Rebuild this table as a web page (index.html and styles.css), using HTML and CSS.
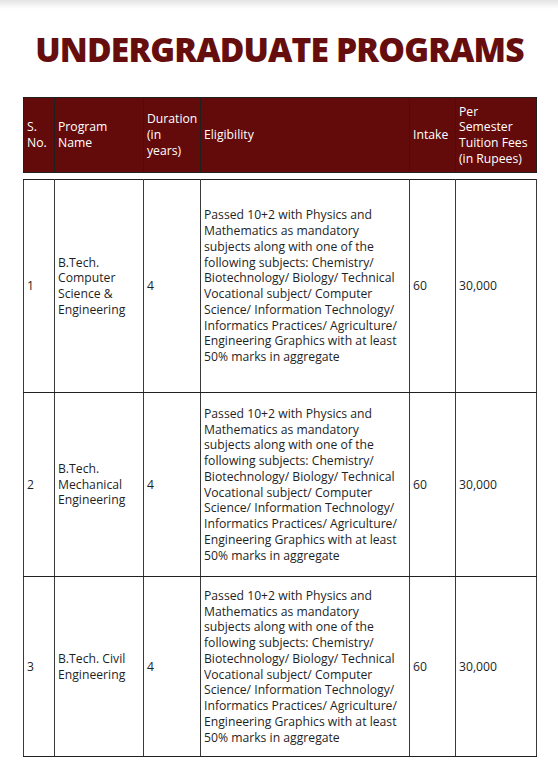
FILE: index.html
```html
<!DOCTYPE html>
<html>
<head>
<meta charset="utf-8">
<link rel="stylesheet" href="styles.css">
</head>
<body>
<div class="topshade"></div>
<main class="page">
  <h1 class="title">UNDERGRADUATE PROGRAMS</h1>
  <table class="grid head">
    <colgroup>
      <col class="c1"><col class="c2"><col class="c3"><col class="c4"><col class="c5"><col class="c6">
    </colgroup>
    <tr>
      <th>S.<br>No.</th>
      <th>Program<br>Name</th>
      <th>Duration<br>(in<br>years)</th>
      <th>Eligibility</th>
      <th>Intake</th>
      <th>Per<br>Semester<br>Tuition Fees<br>(in Rupees)</th>
    </tr>
  </table>
  <table class="grid body">
    <colgroup>
      <col class="c1"><col class="c2"><col class="c3"><col class="c4"><col class="c5"><col class="c6">
    </colgroup>
    <tr class="r1">
      <td>1</td>
      <td>B.Tech.<br>Computer<br>Science &amp;<br>Engineering</td>
      <td>4</td>
      <td>Passed 10+2 with Physics and Mathematics as mandatory subjects along with one of the following subjects: Chemistry/ Biotechnology/ Biology/ Technical Vocational subject/ Computer Science/ Information Technology/ Informatics Practices/ Agriculture/ Engineering Graphics with at least 50% marks in aggregate</td>
      <td>60</td>
      <td>30,000</td>
    </tr>
    <tr class="r2">
      <td>2</td>
      <td>B.Tech.<br>Mechanical<br>Engineering</td>
      <td>4</td>
      <td>Passed 10+2 with Physics and Mathematics as mandatory subjects along with one of the following subjects: Chemistry/ Biotechnology/ Biology/ Technical Vocational subject/ Computer Science/ Information Technology/ Informatics Practices/ Agriculture/ Engineering Graphics with at least 50% marks in aggregate</td>
      <td>60</td>
      <td>30,000</td>
    </tr>
    <tr class="r3">
      <td>3</td>
      <td>B.Tech. Civil<br>Engineering</td>
      <td>4</td>
      <td>Passed 10+2 with Physics and Mathematics as mandatory subjects along with one of the following subjects: Chemistry/ Biotechnology/ Biology/ Technical Vocational subject/ Computer Science/ Information Technology/ Informatics Practices/ Agriculture/ Engineering Graphics with at least 50% marks in aggregate</td>
      <td>60</td>
      <td>30,000</td>
    </tr>
  </table>
</main>
</body>
</html>
```
FILE: styles.css
```css
html, body {
  margin: 0;
  padding: 0;
  background: #ffffff;
}
body {
  font-family: "Open Sans", "DejaVu Sans", sans-serif;
  color: #1f1f1f;
  width: 558px;
  height: 779px;
  overflow: hidden;
  position: relative;
}
.topshade {
  position: absolute;
  left: 0;
  top: 0;
  width: 100%;
  height: 9px;
  background: linear-gradient(to bottom, #e4e4e4, rgba(255,255,255,0));
}
.page {
  padding: 29px 0 0 23px;
}
.title {
  margin: 0;
  width: 513px;
  text-align: center;
  white-space: nowrap;
  font-size: 33.6px;
  line-height: 40px;
  font-weight: 800;
  color: #660e0e;
  letter-spacing: -0.85px;
}
.grid {
  border-collapse: collapse;
  table-layout: fixed;
  width: 513px;
  font-size: 12.2px;
  line-height: 15.75px;
}
.c1 { width: 31px; }
.c2 { width: 89px; }
.c3 { width: 57px; }
.c4 { width: 209px; }
.c5 { width: 46px; }
.c6 { width: 81px; }
.grid th, .grid td {
  border: 1px solid #202020;
  text-align: left;
  vertical-align: middle;
  padding: 0 2px 0 3px;
  font-weight: 400;
}
.body td {
  border-left-color: #3a3a3a;
  border-right-color: #3a3a3a;
}
.head {
  margin-top: 28px;
}
.head th {
  background: #630b0b;
  color: #ffffff;
  height: 74px;
}
.body {
  margin-top: 6px;
}
.r1 td { height: 212px; }
.r2 td { height: 183px; }
.r3 td { height: 179px; }
```
